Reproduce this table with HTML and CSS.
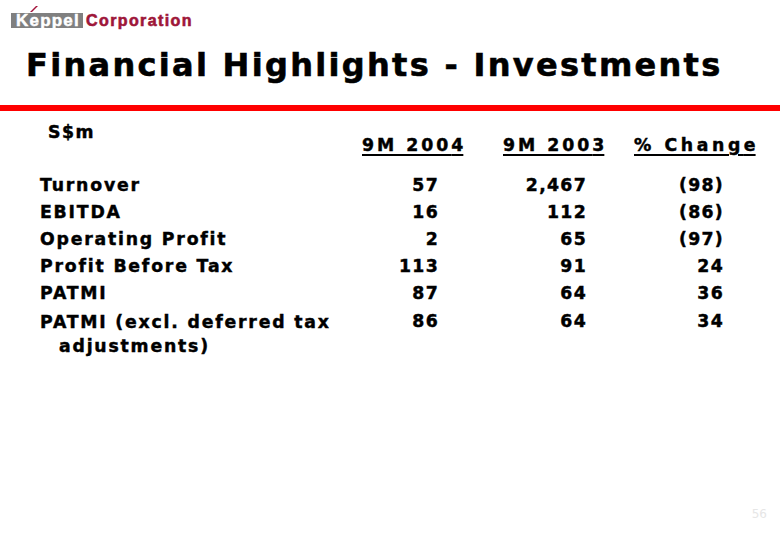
FILE: index.html
```html
<!DOCTYPE html>
<html>
<head>
<meta charset="utf-8">
<link rel="stylesheet" href="styles.css">
</head>
<body>
<div class="slide">
  <div class="logo">
    <span class="keppel">K<span class="acc">e</span>ppel</span>
    <span class="corp">Corporation</span>
  </div>
  <h1 class="title">Financial Highlights - Investments</h1>
  <div class="rule"></div>
  <div class="table">
    <div class="head">
      <div class="unit">S$m</div>
      <div class="colh">9M 200<span class="end">4</span></div>
      <div class="colh">9M 200<span class="end">3</span></div>
      <div class="colh">% Chang<span class="end">e</span></div>
    </div>
    <div class="rows">
      <div class="lab">Turnover</div><div class="num">57</div><div class="num">2,467</div><div class="num">(98)</div>
      <div class="lab">EBITDA</div><div class="num">16</div><div class="num">112</div><div class="num">(86)</div>
      <div class="lab">Operating Profit</div><div class="num">2</div><div class="num">65</div><div class="num">(97)</div>
      <div class="lab">Profit Before Tax</div><div class="num">113</div><div class="num">91</div><div class="num">24</div>
      <div class="lab">PATMI</div><div class="num">87</div><div class="num">64</div><div class="num">36</div>
      <div class="lab last">PATMI (excl. deferred tax<br><span class="indent">adjustments)</span></div><div class="num last">86</div><div class="num last">64</div><div class="num last">34</div>
    </div>
  </div>
  <div class="pageno">56</div>
</div>
</body>
</html>
```
FILE: styles.css
```css
html, body {
  margin: 0;
  padding: 0;
  background: #ffffff;
}
.slide {
  width: 780px;
  height: 540px;
  position: relative;
  font-family: "DejaVu Sans", Verdana, sans-serif;
  color: #000;
}
.logo {
  display: flex;
  align-items: center;
  padding: 13px 0 0 11px;
  height: 15px;
  gap: 3px;
}
.keppel {
  position: relative;
  display: block;
  width: 72px;
  height: 15px;
  box-sizing: border-box;
  padding-left: 5px;
  background: #808080;
  color: #fff;
  font: 700 17px/15px "Liberation Sans", Arial, sans-serif;
  letter-spacing: 1.2px;
  -webkit-text-stroke: 0.5px #fff;
}
.acc {
  position: relative;
}
.acc::before {
  content: "";
  position: absolute;
  left: 4px;
  top: -5px;
  width: 2px;
  height: 6px;
  background: #a3123a;
  transform: skewX(-45deg);
}
.corp {
  color: #9e1639;
  font: 700 16px/15px "Liberation Sans", Arial, sans-serif;
  letter-spacing: 1.4px;
  -webkit-text-stroke: 0.6px #9e1639;
}
.title {
  margin: 3px 0 0;
  padding: 14px 0 0 26px;
  height: 56px;
  box-sizing: border-box;
  font: 700 32px/40px "DejaVu Sans", Tahoma, sans-serif;
  letter-spacing: 2.3px;
  -webkit-text-stroke: 0.6px #000;
}
.rule {
  margin-top: 18px;
  height: 6px;
  background: #ff0000;
}
.table {
  padding-left: 40px;
  font-weight: 700;
  font-size: 17.3px;
  -webkit-text-stroke: 0.45px #000;
}
.head {
  display: grid;
  grid-template-columns: 322px 141px 131px auto;
  height: 56px;
}
.unit {
  padding: 11px 0 0 8px;
  letter-spacing: 1.5px;
}
.colh {
  padding-top: 24px;
  align-self: start;
  justify-self: start;
  text-decoration: underline;
  text-decoration-thickness: 2px;
  text-underline-offset: 3px;
  letter-spacing: 3px;
}
.colh:last-child {
  letter-spacing: 3.6px;
}
.colh .end {
  letter-spacing: 0;
}
.rows {
  display: grid;
  grid-template-columns: 306px 93px 148px 137px;
  grid-auto-rows: 27px;
  line-height: 27px;
  margin-top: 5px;
}
.lab {
  letter-spacing: 1.8px;
}
.num {
  text-align: right;
  letter-spacing: 1.3px;
}
.last {
  margin-top: 1px;
}
.lab.last {
  line-height: 24px;
  margin-top: 3px;
}
.indent {
  padding-left: 19px;
}
.pageno {
  position: absolute;
  right: 13px;
  bottom: 19px;
  font: 12px "DejaVu Sans", sans-serif;
  color: #e6e6e6;
  -webkit-text-stroke: 0;
}
```
